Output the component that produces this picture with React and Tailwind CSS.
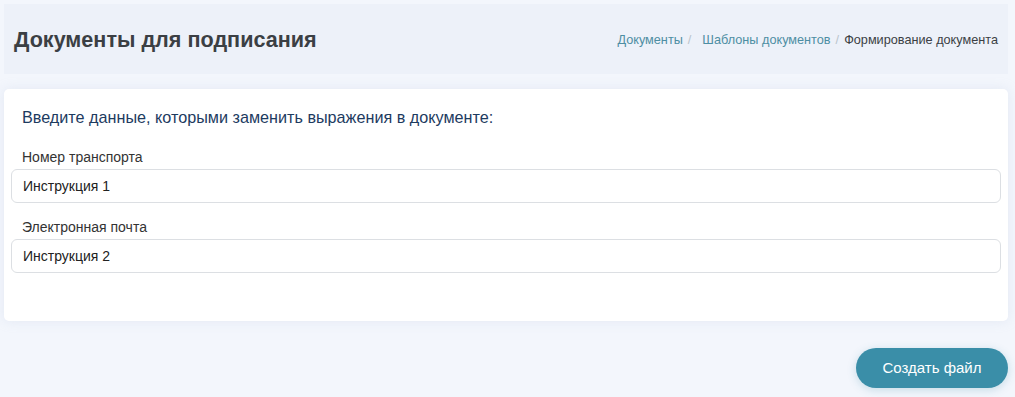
import React from 'react'

const FIELDS = [
  { label: 'Номер транспорта', value: 'Инструкция 1' },
  { label: 'Электронная почта', value: 'Инструкция 2' },
]

export default function App() {
  return (
    <div className="min-h-[397px] bg-[#f3f6fc] pb-1 pl-1 pr-[7px] pt-1 font-['Liberation_Sans',Arial,sans-serif]">
      <div className="flex h-[70px] items-center justify-between bg-[#edf1f9] pl-[10px] pr-[10px] pt-[3px]">
        <h1 className="text-[21.6px] font-bold text-[#3b3f44]">Документы для подписания</h1>
        <nav className="flex items-center text-[12.7px]">
          <a className="text-[#4d8ea3]">Документы</a>
          <span className="ml-[5px] mr-[11px] text-[#b9c4cc]">/</span>
          <a className="text-[#4d8ea3]">Шаблоны документов</a>
          <span className="mx-[5px] text-[#b9c4cc]">/</span>
          <span className="text-[#3b3f44]">Формирование документа</span>
        </nav>
      </div>

      <div className="mt-[15px] h-[232px] rounded-[5px] bg-white px-[7px] pt-[18px] shadow-[0_0_12px_rgba(180,195,220,0.25)]">
        <p className="pl-[11px] text-[16.2px] leading-[20px] text-[#1d3b5f]">
          Введите данные, которыми заменить выражения в документе:
        </p>
        <div className="mt-[21px] flex flex-col gap-[15px]">
          {FIELDS.map(f => (
            <div key={f.label}>
              <label className="block pl-[11px] text-[14px] leading-[18px] text-[#333]">{f.label}</label>
              <div className="mt-[3px] flex h-[34px] items-center rounded-[6px] border border-[#dcdfe3] pl-[11px] text-[14px] text-[#222]">
                {f.value}
              </div>
            </div>
          ))}
        </div>
      </div>

      <div className="mt-[27px] flex justify-end">
        <button className="h-[40px] w-[152px] rounded-full bg-[#3a8ea8] text-[15px] text-white shadow-[0_2px_8px_rgba(58,142,168,0.25)]">
          Создать файл
        </button>
      </div>
    </div>
  )
}
